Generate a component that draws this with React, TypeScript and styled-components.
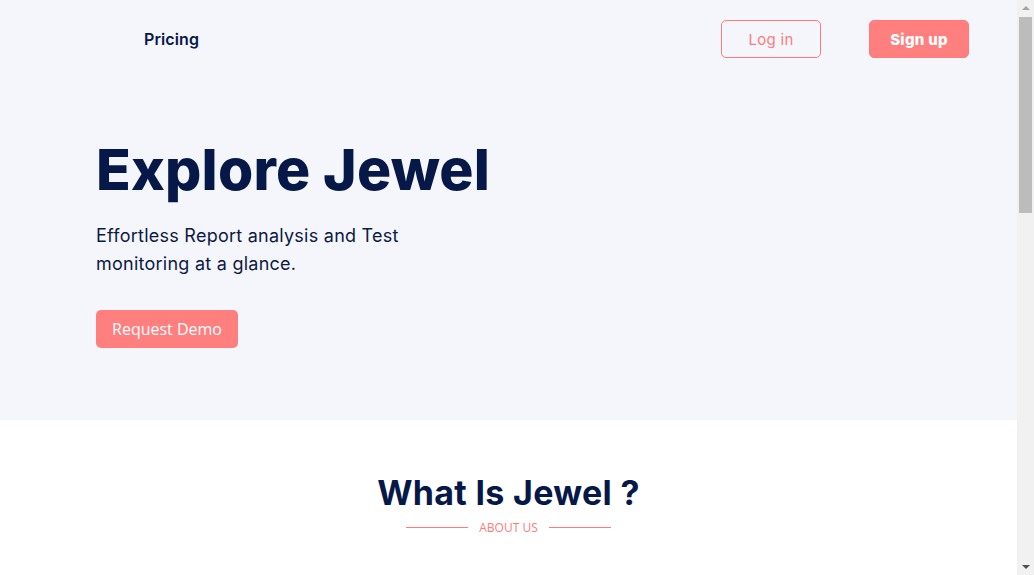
import React from "react";
import styled, { createGlobalStyle } from "styled-components";

const Global = createGlobalStyle`
  html, body { margin: 0; padding: 0; overflow: hidden; }
  body { font-family: "Inter", "Liberation Sans", sans-serif; background: #ffffff; }
  * { box-sizing: border-box; }
`;

const Window = styled.div`
  display: flex;
  height: 100vh;
`;

const Page = styled.main`
  flex: 1;
  min-width: 0;
  overflow: hidden;
`;

const ScrollBar = styled.div`
  width: 17px;
  background: #f1f1f1;
  display: flex;
  flex-direction: column;
  align-items: center;
`;

const Arrow = styled.div<{ $down?: boolean }>`
  height: 17px;
  width: 17px;
  display: flex;
  align-items: center;
  justify-content: center;
  &::before {
    content: "";
    width: 0;
    height: 0;
    border-left: 4px solid transparent;
    border-right: 4px solid transparent;
    ${(p) =>
      p.$down
        ? "border-top: 4px solid #505050; margin-top: 1px;"
        : "border-bottom: 4px solid #a3a3a3; margin-bottom: 1px;"}
  }
`;

const Track = styled.div`
  flex: 1;
  width: 100%;
  padding: 0 2px;
`;

const Thumb = styled.div`
  height: 196px;
  background: #bcbcbc;
`;

const Hero = styled.section`
  background: #f5f6fc;
  height: 420px;
  display: flex;
  flex-direction: column;
`;

const Nav = styled.nav`
  display: flex;
  align-items: center;
  height: 78px;
  padding: 0 48px 0 144px;
`;

const NavLink = styled.a`
  font-size: 16px;
  font-weight: 600;
  color: #061848;
  text-decoration: none;
  flex: 1;
  letter-spacing: 0.1px;
`;

const NavButton = styled.button<{ $filled?: boolean }>`
  width: 100px;
  height: 38px;
  border-radius: 5px;
  border: 1px solid #ff7b7b;
  background: ${(p) => (p.$filled ? "#ff7f7f" : "transparent")};
  color: ${(p) => (p.$filled ? "#ffffff" : "#ff7b7b")};
  font-family: "Inter", sans-serif;
  font-size: 15px;
  font-weight: ${(p) => (p.$filled ? 800 : 400)};
  letter-spacing: 0.3px;
  margin-left: ${(p) => (p.$filled ? "48px" : "0")};
  cursor: pointer;
`;

const HeroBody = styled.div`
  padding: 54px 0 0 96px;
  display: flex;
  flex-direction: column;
  align-items: flex-start;
`;

const Title = styled.h1`
  margin: 0;
  font-size: 57px;
  font-weight: 800;
  line-height: 76px;
  color: #061848;
  letter-spacing: 0.2px;
`;

const Subtitle = styled.p`
  margin: 14px 0 0;
  font-size: 18px;
  line-height: 28px;
  color: #0c1a44;
  width: 340px;
  font-weight: 400;
  letter-spacing: 0.25px;
`;

const DemoButton = styled.button`
  margin-top: 32px;
  width: 142px;
  height: 38px;
  border: none;
  border-radius: 5px;
  background: #ff7f7f;
  color: #ffffff;
  font-family: "Open Sans", sans-serif;
  font-size: 16px;
  cursor: pointer;
`;

const About = styled.section`
  height: 1180px;
  display: flex;
  flex-direction: column;
  align-items: center;
  padding-top: 51px;
`;

const SectionTitle = styled.h2`
  margin: 0;
  font-size: 34px;
  font-weight: 700;
  line-height: 44px;
  color: #061848;
  letter-spacing: 0.3px;
`;

const Eyebrow = styled.div`
  display: flex;
  align-items: center;
  gap: 11px;
  margin-top: 4px;
  font-family: "Open Sans", sans-serif;
  font-size: 12px;
  color: #ff7b7b;
  &::before, &::after {
    content: "";
    width: 62px;
    height: 1px;
    background: #ff7b7b;
  }
`;

export default function App() {
  return (
    <Window>
      <Global />
      <Page>
        <Hero>
          <Nav>
            <NavLink href="#">Pricing</NavLink>
            <NavButton>Log in</NavButton>
            <NavButton $filled>Sign up</NavButton>
          </Nav>
          <HeroBody>
            <Title>Explore Jewel</Title>
            <Subtitle>Effortless Report analysis and Test monitoring at a glance.</Subtitle>
            <DemoButton>Request Demo</DemoButton>
          </HeroBody>
        </Hero>
        <About>
          <SectionTitle>What Is Jewel ?</SectionTitle>
          <Eyebrow>ABOUT US</Eyebrow>
        </About>
      </Page>
      <ScrollBar>
        <Arrow />
        <Track>
          <Thumb />
        </Track>
        <Arrow $down />
      </ScrollBar>
    </Window>
  );
}
